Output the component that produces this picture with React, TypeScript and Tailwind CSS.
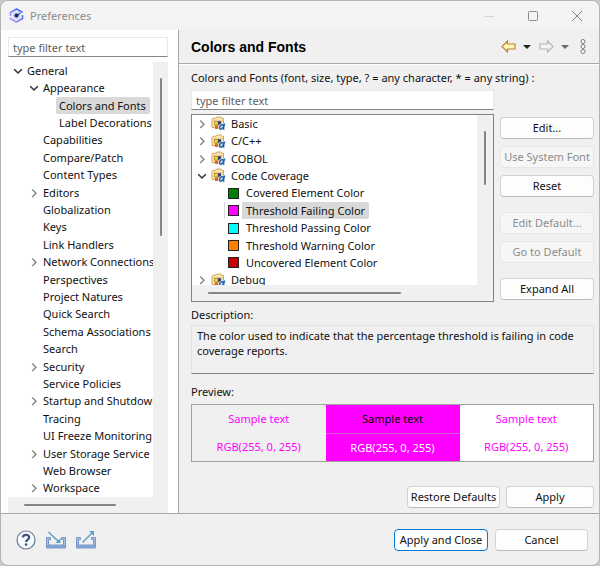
import { useState } from "react";

type NavItem = {
  name: string;
  level: number;
  state?: "open" | "closed";
};

type ColorItem = {
  name: string;
  state?: "open" | "closed";
  color?: string;
};

const navItems: NavItem[] = [
  { name: "General", level: 0, state: "open" },
  { name: "Appearance", level: 1, state: "open" },
  { name: "Colors and Fonts", level: 2 },
  { name: "Label Decorations", level: 2 },
  { name: "Capabilities", level: 1 },
  { name: "Compare/Patch", level: 1 },
  { name: "Content Types", level: 1 },
  { name: "Editors", level: 1, state: "closed" },
  { name: "Globalization", level: 1 },
  { name: "Keys", level: 1 },
  { name: "Link Handlers", level: 1 },
  { name: "Network Connections", level: 1, state: "closed" },
  { name: "Perspectives", level: 1 },
  { name: "Project Natures", level: 1 },
  { name: "Quick Search", level: 1 },
  { name: "Schema Associations", level: 1 },
  { name: "Search", level: 1 },
  { name: "Security", level: 1, state: "closed" },
  { name: "Service Policies", level: 1 },
  { name: "Startup and Shutdown", level: 1, state: "closed" },
  { name: "Tracing", level: 1 },
  { name: "UI Freeze Monitoring", level: 1 },
  { name: "User Storage Service", level: 1, state: "closed" },
  { name: "Web Browser", level: 1 },
  { name: "Workspace", level: 1, state: "closed" },
];

const colorItems: ColorItem[] = [
  { name: "Basic", state: "closed" },
  { name: "C/C++", state: "closed" },
  { name: "COBOL", state: "closed" },
  { name: "Code Coverage", state: "open" },
  { name: "Covered Element Color", color: "bg-[#008000]" },
  { name: "Threshold Failing Color", color: "bg-[#ff00ff]" },
  { name: "Threshold Passing Color", color: "bg-[#00ffff]" },
  { name: "Threshold Warning Color", color: "bg-[#ff8000]" },
  { name: "Uncovered Element Color", color: "bg-[#c80000]" },
  { name: "Debug", state: "closed" },
];

const levelPadding = ["pl-1", "pl-5", "pl-9"];

const inputClass =
  "block h-5 w-full border border-[#e8e8e8] border-b-[#868686] bg-white px-1 text-[11px] text-[#222] placeholder:text-[#5e5e5e] outline-none";

function Chevron({ state }: { state?: "open" | "closed" }) {
  return (
    <svg viewBox="0 0 12 12" className="size-3 shrink-0" fill="none">
      {state === "open" && (
        <path d="M2.2 4.3 6 8l3.8-3.7" stroke="#333" strokeWidth="1.6" />
      )}
      {state === "closed" && (
        <path d="m4.2 2.4 3.8 3.8L4.2 10" stroke="#858585" strokeWidth="1.4" />
      )}
    </svg>
  );
}

function FolderIcon() {
  return (
    <svg viewBox="0 0 15 15" className="size-[15px] shrink-0">
      <path
        d="M1 11.5V3.2L2 2.200h3L6 1h4l1 1.400h1.500V11.500z"
        fill="#fbe3ac"
        stroke="#d3a561"
      />
      <path d="M2 4.500h10" stroke="#e8c88c" strokeWidth=".8" />
      <rect x="3.500" y="5.500" width="3.500" height="3.500" fill="#f4dc20" stroke="#8d7430" strokeWidth=".6" />
      <rect x="7" y="5.200" width="3.200" height="3.600" fill="#34446e" />
      <rect x="4" y="9.300" width="3.400" height="3.700" fill="#df6a28" />
      <path
        d="M13.500 7.500 12.400 12q-.2 1.200 1 1M12.700 10q-.6-1.700-2-1.200-1.900.8-2.100 2.600-.1 2 1.500 1.700 1.600-.5 2.600-3.100"
        fill="none"
        stroke="#e8f0f8"
        strokeWidth="2.800"
      />
      <path
        d="M13.500 7.500 12.400 12q-.2 1.200 1 1M12.700 10q-.6-1.700-2-1.200-1.900.8-2.100 2.600-.1 2 1.500 1.700 1.600-.5 2.600-3.100"
        fill="none"
        stroke="#2463a8"
        strokeWidth="1.500"
      />
    </svg>
  );
}

function LogoIcon() {
  return (
    <svg viewBox="0 0 15 15" className="size-[15px]" fill="none">
      <defs>
        <linearGradient id="logo" x1="1" y1="0" x2="0" y2="1">
          <stop stopColor="#2f68ff" />
          <stop offset="1" stopColor="#b79cff" />
        </linearGradient>
      </defs>
      <path
        d="M1.500 8V4.500L7.500 1l6 3.500M1.500 9.500v1.200L7.500 14l6-3.400V7"
        stroke="url(#logo)"
        strokeWidth="1.700"
      />
      <circle cx="7.500" cy="7.500" r="3" stroke="#b9c6ff" strokeWidth="1.200" />
      <circle cx="7.500" cy="7.500" r="2" fill="#0b2265" />
      <path d="m8.500 6.700 3-1.500" stroke="#0b2265" />
    </svg>
  );
}

function TrayIcon({ out }: { out?: boolean }) {
  return (
    <svg viewBox="0 0 22 20" className="h-5 w-[22px]" fill="none">
      <path
        d="M5.500 7.500h-4v10.500h19V7.500h-4v2h2v5.500h-15V9.500h2z"
        fill="#a9bfe0"
        stroke="#7a97c4"
      />
      <path d="M2 16.500h18" stroke="#7f9fd0" strokeWidth="2.500" />
      {out ? (
        <>
          <path d="M7.500 12.500 17 3" stroke="#5a9fc6" strokeWidth="1.500" />
          <path d="M14 1h5v5z" fill="#5a9fc6" />
        </>
      ) : (
        <>
          <path d="m3.500 2 10 9.500" stroke="#5a9fc6" strokeWidth="1.500" />
          <path d="M10.500 13h5V8z" fill="#5a9fc6" />
        </>
      )}
    </svg>
  );
}

function DialogButton({
  children,
  disabled,
  primary,
  className = "",
}: {
  children: string;
  disabled?: boolean;
  primary?: boolean;
  className?: string;
}) {
  const look = disabled
    ? "border-[#e6e6e6] bg-[#f6f6f6] text-[#8c8c8c]"
    : primary
      ? "border-[#0078d4] bg-[#fdfdfd] text-[#111]"
      : "border-[#d2d2d2] border-b-[#bdbdbd] bg-[#fdfdfd] text-[#111]";
  return (
    <button
      type="button"
      disabled={disabled}
      className={`h-[22px] shrink-0 rounded border text-center whitespace-nowrap ${look} ${className}`}
    >
      {children}
    </button>
  );
}

export default function App() {
  const [page, setPage] = useState("Colors and Fonts");
  const [color, setColor] = useState("Threshold Failing Color");

  return (
    <div className="min-h-screen bg-[#c9c9c9] font-['Noto_Sans','Open_Sans',sans-serif] text-[11px] leading-4 text-[#111]">
      <div className="flex min-h-screen flex-col overflow-hidden rounded-lg border border-[#b4b4b4] bg-[#f0f0f0]">
        <header className="flex h-[29px] shrink-0 items-center bg-[#f3f3f3] pl-2 text-[#8b8b8b]">
          <LogoIcon />
          <span className="ml-1.5 flex-1">Preferences</span>
          <button type="button" aria-label="Minimize" disabled className="grid w-11 place-items-center">
            <svg viewBox="0 0 10 10" className="size-2.5" stroke="#d6d6d6">
              <path d="M0 5.500h10" />
            </svg>
          </button>
          <button type="button" aria-label="Maximize" className="grid w-11 place-items-center">
            <svg viewBox="0 0 10 10" className="size-2.5" fill="none" stroke="#8b8b8b">
              <rect x=".5" y=".5" width="9" height="9" rx="1" />
            </svg>
          </button>
          <button type="button" aria-label="Close" className="grid w-11 place-items-center">
            <svg viewBox="0 0 10 10" className="size-2.5" stroke="#858585">
              <path d="m0 0 10 10M10 0 0 10" />
            </svg>
          </button>
        </header>

        <div className="flex flex-1">
          <aside className="flex w-[178px] shrink-0 flex-col border-r border-[#a8a8a8] bg-white pt-[7px] pr-2.5 pl-[7px]">
            <input type="text" aria-label="Filter preferences" placeholder="type filter text" className={inputClass} />
            <div className="mt-[5px] flex flex-1">
              <ul role="tree" className="flex min-w-0 flex-1 flex-col overflow-hidden">
                {navItems.map((item) => (
                  <li
                    key={item.name}
                    role="treeitem"
                    aria-selected={item.name === page}
                    className={`flex min-h-[17px] flex-1 items-center ${levelPadding[item.level]}`}
                  >
                    <Chevron state={item.state} />
                    <button
                      type="button"
                      onClick={() => setPage(item.name)}
                      className={`h-full rounded-xs pr-1 pl-[3px] whitespace-nowrap ${item.name === page ? "bg-[#d9d9d9]" : ""}`}
                    >
                      {item.name}
                    </button>
                  </li>
                ))}
              </ul>
              <div className="flex w-[15px] justify-center bg-[#f0f0f0] pt-4">
                <div className="h-[158px] w-0.5 rounded bg-[#858585]" />
              </div>
            </div>
            <div className="flex h-4 items-center bg-[#f0f0f0] pl-4">
              <div className="h-0.5 w-[92px] rounded bg-[#858585]" />
            </div>
          </aside>

          <main className="flex min-w-0 flex-1 flex-col">
            <div className="flex h-[34px] shrink-0 items-center border-b border-[#a8a8a8] pr-[13px] pl-3">
              <h1 className="flex-1 font-['Liberation_Sans',Arial,sans-serif] text-[14px] font-bold text-black">
                Colors and Fonts
              </h1>
              <div className="flex items-center">
                <button type="button" aria-label="Back">
                  <svg viewBox="0 0 15 13" className="h-[13px] w-[15px]">
                    <path d="M1 6.500 6.500 1v3H14v5H6.500v3z" fill="#fff4b8" stroke="#b8862c" strokeWidth="1.2" />
                  </svg>
                </button>
                <button type="button" aria-label="Back history" className="ml-[7px]">
                  <svg viewBox="0 0 8 4" className="h-1 w-2">
                    <path d="M0 0h8L4 4z" fill="#222" />
                  </svg>
                </button>
                <button type="button" aria-label="Forward" className="ml-2">
                  <svg viewBox="0 0 15 13" className="h-[13px] w-[15px]">
                    <path d="M14 6.500 8.500 1v3H1v5h7.500v3z" fill="#f4f4f4" stroke="#b5b5b5" strokeWidth="1.2" />
                  </svg>
                </button>
                <button type="button" aria-label="Forward history" className="ml-[7px]">
                  <svg viewBox="0 0 8 4" className="h-1 w-2">
                    <path d="M0 0h8L4 4z" fill="#6d6d6d" />
                  </svg>
                </button>
                <button type="button" aria-label="View menu" className="ml-[11px]">
                  <svg viewBox="0 0 6 15" className="h-[15px] w-1.5" fill="#fff" stroke="#777">
                    <circle cx="3" cy="2.500" r="2" />
                    <circle cx="3" cy="7.500" r="2" />
                    <circle cx="3" cy="12.500" r="2" />
                  </svg>
                </button>
              </div>
            </div>

            <div className="flex flex-1 flex-col border-t border-white pt-[3px] pr-[5px] pb-[5px] pl-3">
              <label htmlFor="filter" className="h-5 leading-5">
                Colors and Fonts (font, size, type, ? = any character, * = any string) :
              </label>
              <div className="mt-0.5 flex gap-1.5">
                <div className="min-w-0 flex-1">
                  <input id="filter" type="text" placeholder="type filter text" className={inputClass} />
                  <div className="mt-1 flex h-[188px] border border-[#828282]">
                    <div className="flex min-w-0 flex-1 flex-col">
                      <div className="h-[170px] overflow-hidden bg-white">
                        <ul role="tree" className="flex h-[174px] flex-col">
                          {colorItems.map((item) => (
                            <li
                              key={item.name}
                              role="treeitem"
                              aria-selected={item.name === color}
                              className="flex min-h-0 flex-1 items-center pl-1"
                            >
                              {item.color ? (
                                <button
                                  type="button"
                                  onClick={() => setColor(item.name)}
                                  className="ml-7 flex h-full items-center"
                                >
                                  <span
                                    className={`flex h-full w-[18px] items-center justify-center border-l ${item.name === color ? "border-[#d9d9d9]" : "border-transparent"}`}
                                  >
                                    <span className={`size-[11px] border border-[#222] ${item.color}`} />
                                  </span>
                                  <span
                                    className={`flex h-full items-center rounded-r-xs px-1 whitespace-nowrap ${item.name === color ? "bg-[#d9d9d9]" : ""}`}
                                  >
                                    {item.name}
                                  </span>
                                </button>
                              ) : (
                                <>
                                  <Chevron state={item.state} />
                                  <button
                                    type="button"
                                    onClick={() => setColor(item.name)}
                                    className="ml-[3px] flex items-center gap-[5px]"
                                  >
                                    <FolderIcon />
                                    {item.name}
                                  </button>
                                </>
                              )}
                            </li>
                          ))}
                        </ul>
                      </div>
                      <div className="flex flex-1 items-center pl-4">
                        <div className="h-0.5 w-[193px] rounded bg-[#858585]" />
                      </div>
                    </div>
                    <div className="flex w-4 justify-center pt-4">
                      <div className="h-[54px] w-0.5 rounded bg-[#858585]" />
                    </div>
                  </div>
                </div>
                <div className="flex w-[94px] flex-col gap-[7px] pt-[27px]">
                  <DialogButton>Edit...</DialogButton>
                  <DialogButton disabled>Use System Font</DialogButton>
                  <DialogButton>Reset</DialogButton>
                  <DialogButton disabled className="mt-2">Edit Default...</DialogButton>
                  <DialogButton disabled>Go to Default</DialogButton>
                  <DialogButton className="mt-2">Expand All</DialogButton>
                </div>
              </div>

              <label htmlFor="description" className="mt-[3px] h-5 leading-5">
                Description:
              </label>
              <textarea
                id="description"
                readOnly
                className="block h-[49px] w-full resize-none border border-[#e2e2e2] border-b-[#868686] bg-transparent px-[5px] py-0.5 leading-[15px] outline-none"
                value="The color used to indicate that the percentage threshold is failing in code coverage reports."
              />

              <h2 id="preview" className="mt-2 h-5 leading-5">
                Preview:
              </h2>
              <table
                aria-labelledby="preview"
                className="mt-0.5 w-full table-fixed border border-[#a0a0a0] text-center text-[#ff00ff]"
              >
                <tbody>
                  <tr className="h-[29px]">
                    <td>Sample text</td>
                    <td className="border-b border-[#d85ad8] bg-[#ff00ff] text-black">Sample text</td>
                    <td className="bg-white">Sample text</td>
                  </tr>
                  <tr className="h-7">
                    <td>RGB(255, 0, 255)</td>
                    <td className="bg-[#ff00ff] text-white">RGB(255, 0, 255)</td>
                    <td className="bg-white">RGB(255, 0, 255)</td>
                  </tr>
                </tbody>
              </table>

              <div className="mt-auto flex justify-end gap-1.5">
                <DialogButton className="w-[93px]">Restore Defaults</DialogButton>
                <DialogButton className="w-[88px]">Apply</DialogButton>
              </div>
            </div>
          </main>
        </div>

        <footer className="flex h-[52px] shrink-0 items-center border-t border-[#a8a8a8] pr-[11px] pl-[15px]">
          <button type="button" aria-label="Help">
            <svg viewBox="0 0 20 20" className="size-5" fill="none">
              <circle cx="10" cy="10" r="9" fill="#f8f9fb" stroke="#66799b" strokeWidth="1.2" />
              <path
                d="M6.800 7.400Q7 4.800 10 4.800t3.200 2.500q0 1.400-1.500 2.400-1.600 1-1.600 2.200"
                stroke="#40557e"
                strokeWidth="2.200"
              />
              <circle cx="10.100" cy="14.600" r="1.300" fill="#40557e" />
            </svg>
          </button>
          <button type="button" aria-label="Import" className="ml-[9px]">
            <TrayIcon />
          </button>
          <button type="button" aria-label="Export" className="ml-2">
            <TrayIcon out />
          </button>
          <div className="ml-auto flex gap-[7px]">
            <DialogButton primary className="w-[94px]">Apply and Close</DialogButton>
            <DialogButton className="w-[93px]">Cancel</DialogButton>
          </div>
        </footer>
      </div>
    </div>
  );
}
